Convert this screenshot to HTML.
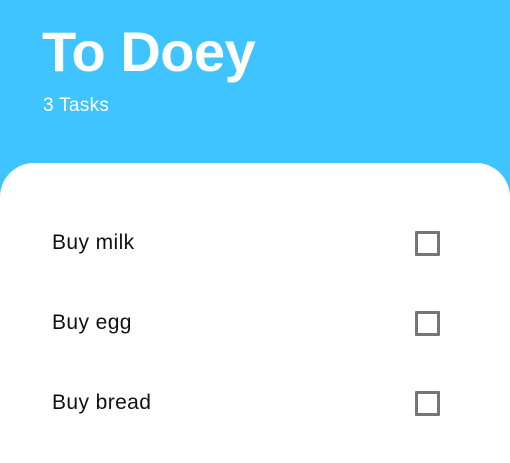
<!DOCTYPE html>
<html><head><style>
body{margin:0;width:510px;height:445px;background:#40C4FF;font-family:"Liberation Sans",sans-serif;overflow:hidden;position:relative}
.t{position:absolute;left:42px;top:20px;font-size:56px;font-weight:bold;color:#fff;line-height:64px;letter-spacing:-0.5px}
.s{position:absolute;left:43px;top:95px;font-size:19px;color:#fff;line-height:22px;letter-spacing:0.3px}
.card{position:absolute;left:0;top:163px;width:510px;height:300px;background:#fff;border-radius:34px 34px 0 0}
.i{position:absolute;left:52px;font-size:21px;color:#111;line-height:24px;letter-spacing:0.4px}
.c{position:absolute;left:415px;width:19px;height:19px;border:3px solid #757575;border-radius:1px}
</style></head><body>
<div class="t">To Doey</div>
<div class="s">3 Tasks</div>
<div class="card"></div>
<div class="i" style="top:231px">Buy milk</div><div class="c" style="top:231px"></div>
<div class="i" style="top:311px">Buy egg</div><div class="c" style="top:311px"></div>
<div class="i" style="top:391px">Buy bread</div><div class="c" style="top:391px"></div>
</body></html>
